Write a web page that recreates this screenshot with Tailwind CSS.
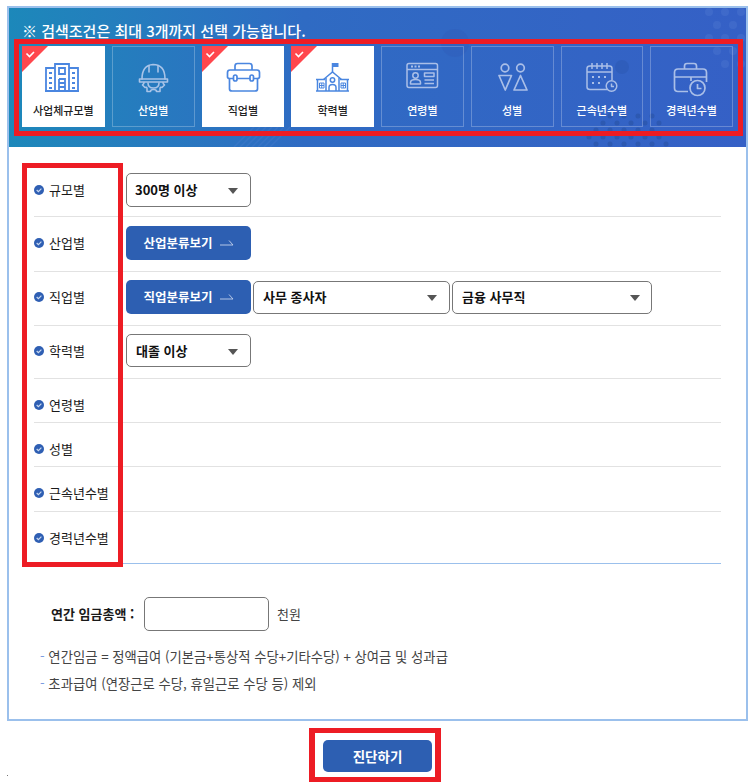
<!DOCTYPE html>
<html lang="ko">
<head>
<meta charset="utf-8">
<title>검색조건</title>
<script src="https://cdn.jsdelivr.net/npm/@tailwindcss/browser@4"></script>
</head>
<body class="bg-white font-['Noto_Sans_CJK_KR','Noto_Sans',sans-serif] text-[13px] text-[#1a1a1a]">
<div class="relative w-[752px] h-[782px] overflow-hidden pt-[6px] pl-[7px]">
  <div class="relative w-[741px] h-[715px] border-2 border-[#9bc0ec]">
    <!-- header -->
    <div class="relative w-[737px] h-[139px] bg-linear-to-r from-[#1c88ba] via-[#2f6bc3] via-40% to-[#3560c6] overflow-hidden">
      <svg class="absolute left-0 top-0 pointer-events-none" width="737" height="139" viewBox="0 0 737 139">
        <circle cx="446" cy="35" r="14" fill="#2f5cb8" opacity=".4"/>
        <circle cx="613" cy="59" r="7" fill="#2a56b0" opacity=".45"/>
        <g fill="#5a82d6" opacity=".28">
          <circle cx="700" cy="4" r="4"/><circle cx="716" cy="4" r="4"/><circle cx="732" cy="4" r="4"/>
          <circle cx="708" cy="17" r="4"/><circle cx="724" cy="17" r="4"/><circle cx="700" cy="30" r="4"/><circle cx="716" cy="30" r="4"/><circle cx="732" cy="30" r="4"/>
          <circle cx="708" cy="43" r="4"/><circle cx="724" cy="43" r="4"/><circle cx="716" cy="56" r="4"/><circle cx="732" cy="56" r="4"/>
        </g>
        <g fill="#27509f" opacity=".5">
          <circle cx="601" cy="108" r="2.5"/><circle cx="615" cy="108" r="2.5"/><circle cx="629" cy="108" r="2.5"/><circle cx="643" cy="108" r="2.5"/>
          <circle cx="594" cy="115" r="2.5"/><circle cx="608" cy="115" r="2.5"/><circle cx="622" cy="115" r="2.5"/><circle cx="636" cy="115" r="2.5"/><circle cx="650" cy="115" r="2.5"/>
          <circle cx="587" cy="122" r="2.5"/><circle cx="601" cy="122" r="2.5"/><circle cx="615" cy="122" r="2.5"/><circle cx="629" cy="122" r="2.5"/><circle cx="643" cy="122" r="2.5"/>
          <circle cx="580" cy="129" r="2.5"/><circle cx="594" cy="129" r="2.5"/><circle cx="608" cy="129" r="2.5"/><circle cx="622" cy="129" r="2.5"/><circle cx="636" cy="129" r="2.5"/><circle cx="650" cy="129" r="2.5"/>
          <circle cx="587" cy="136" r="2.5"/><circle cx="601" cy="136" r="2.5"/><circle cx="615" cy="136" r="2.5"/><circle cx="629" cy="136" r="2.5"/><circle cx="643" cy="136" r="2.5"/><circle cx="657" cy="136" r="2.5"/>
        </g>
        <path d="M225 139 L245 119 M231 139 L251 119 M237 139 L257 119 M243 139 L263 119 M249 139 L269 119 M255 139 L275 119 M261 139 L281 119" stroke="#4b7ed0" stroke-width="1.5" opacity=".35"/>
      </svg>
      <h2 class="relative h-[31px] pl-[13px] text-[15px] leading-[45px] font-medium text-white whitespace-nowrap">※ 검색조건은 최대 3개까지 선택 가능합니다.</h2>
      <div class="relative ml-[5px] mt-0 w-[729px] h-[97px] border-[5px] border-[#ed1c24] pt-[2px] pl-[3px]">
        <div class="grid grid-cols-8 gap-[7px] w-[711px] h-[81px] text-center text-[11px] font-medium">
          <!-- 사업체규모별 -->
          <div class="bg-white text-[#222]">
            <svg class="block" width="83" height="52" viewBox="0 0 83 52">
              <path d="M0 0H26L0 26Z" fill="#ff474d"/><path d="M4.500 7.500L7.500 10.500L12 6" fill="none" stroke="#fff" stroke-width="1.600"/>
              <g fill="none" stroke="#4a86e0" stroke-width="1.800">
                <path d="M24 22H33V45H24ZM47 22H56V45H47ZM33 18H47V45H33ZM23 45H57"/>
                <path d="M37 22H43V28H37ZM37 33H43V45M37 33V45M37 37H43M37 41H43"/>
              </g>
              <path d="M27 26h3v2h-3zM27 31h3v2h-3zM27 36h3v2h-3zM27 41h3v2h-3zM50 26h3v2h-3zM50 31h3v2h-3zM50 36h3v2h-3zM50 41h3v2h-3z" fill="#4a86e0"/>
            </svg>
            <div class="h-[24px] leading-[24px] whitespace-nowrap">사업체규모별</div>
          </div>
          <!-- 산업별 -->
          <div class="ring-1 ring-inset ring-white/25 text-white">
            <svg class="block" width="83" height="52" viewBox="0 0 83 52">
              <g fill="none" stroke="#a9c4e8" stroke-width="1.600" stroke-linecap="round" stroke-linejoin="round">
                <path d="M30 33C30 24 34 19 41 18.500C49 18.500 53 24 53 33"/>
                <path d="M37 19.500V26M46 19.500V26"/>
                <path d="M27.500 33H55.500V36H27.500Z"/>
                <path d="M32 36.500C32 38 31 38.500 30.500 39L33 41.500C34 41 35 41 35 42.500V45.500H38.500C38.500 44 40 43.500 41.500 43.500C43 43.500 44.500 44 44.500 45.500H48V42.500C48 41 49 41 50 41.500L52.500 39C52 38.500 51 38 51 36.500"/>
                <path d="M36 37C36 41 38.500 42 41.500 42C44.500 42 47 41 47 37"/>
              </g>
            </svg>
            <div class="h-[24px] leading-[24px] whitespace-nowrap">산업별</div>
          </div>
          <!-- 직업별 -->
          <div class="bg-white text-[#222]">
            <svg class="block" width="83" height="52" viewBox="0 0 83 52">
              <path d="M0 0H26L0 26Z" fill="#ff474d"/><path d="M4.500 7.500L7.500 10.500L12 6" fill="none" stroke="#fff" stroke-width="1.600"/>
              <g fill="none" stroke="#4a86e0" stroke-width="1.700" stroke-linejoin="round">
                <path d="M33 24V20C33 18.500 34 17.500 35.500 17.500H47.500C49 17.500 50 18.500 50 20V24"/>
                <path d="M25.500 31V26.500C25.500 25 26.500 24 28 24H55C56.500 24 57.500 25 57.500 26.500V31C57.500 32 56.500 32.500 55 32.500H28C26.500 32.500 25.500 32 25.500 31Z"/>
                <path d="M27.500 32.500V43C27.500 44.500 28.500 45 30 45H53C54.500 45 55.500 44.500 55.500 43V32.500"/>
                <rect x="31.500" y="29" width="3.500" height="6" rx="1.750" fill="#fff"/>
                <rect x="48" y="29" width="3.500" height="6" rx="1.750" fill="#fff"/>
              </g>
            </svg>
            <div class="h-[24px] leading-[24px] whitespace-nowrap">직업별</div>
          </div>
          <!-- 학력별 -->
          <div class="bg-white text-[#222]">
            <svg class="block" width="83" height="52" viewBox="0 0 83 52">
              <path d="M0 0H26L0 26Z" fill="#ff474d"/><path d="M4.500 7.500L7.500 10.500L12 6" fill="none" stroke="#fff" stroke-width="1.600"/>
              <g fill="none" stroke="#4a86e0" stroke-width="1.500">
                <path d="M41.500 26V17"/>
                <path d="M32.500 33.500L41.500 26L50.500 33.500"/>
                <path d="M35 32V45M48 32V45M25 33.500H34M49 33.500H58M26.500 33.500V45M56.500 33.500V45M25 45H58"/>
                <circle cx="41.500" cy="34" r="2.200"/>
                <path d="M38 45V41.500C38 39.500 39.500 38.500 41.500 38.500C43.500 38.500 45 39.500 45 41.500V45"/>
                <path d="M28.500 37H33V42H28.500ZM30.750 37V42M28.500 39.500H33M50 37H54.500V42H50ZM52.250 37V42M50 39.500H54.500" stroke-width="1"/>
              </g>
              <path d="M42 17H47.500V21H42Z" fill="#4a86e0"/>
            </svg>
            <div class="h-[24px] leading-[24px] whitespace-nowrap">학력별</div>
          </div>
          <!-- 연령별 -->
          <div class="ring-1 ring-inset ring-white/25 text-white">
            <svg class="block" width="83" height="52" viewBox="0 0 83 52">
              <g fill="none" stroke="#aabfe8" stroke-width="1.500" stroke-linejoin="round">
                <rect x="26" y="17.500" width="30.500" height="24" rx="2"/>
                <path d="M26 23.500H56.500"/>
                <circle cx="34.500" cy="29.500" r="2.700"/>
                <path d="M29.500 38V36.500C29.500 34.500 31.500 33.500 34.500 33.500C37.500 33.500 39.500 34.500 39.500 36.500V38Z"/>
                <path d="M43.500 27H53V30.500H43.500ZM43.500 34H53M43.500 37.500H53"/>
              </g>
              <path d="M30 19.500h2v2h-2zM33.500 19.500h2v2h-2zM37 19.500h2v2h-2z" fill="#aabfe8"/>
            </svg>
            <div class="h-[24px] leading-[24px] whitespace-nowrap">연령별</div>
          </div>
          <!-- 성별 -->
          <div class="ring-1 ring-inset ring-white/25 text-white">
            <svg class="block" width="83" height="52" viewBox="0 0 83 52">
              <g fill="none" stroke="#aabfe8" stroke-width="1.700" stroke-linejoin="round">
                <circle cx="34" cy="22" r="3.800"/>
                <circle cx="49.500" cy="22" r="3.800"/>
                <path d="M28 29.500H40.500L34.250 44Z"/>
                <path d="M43 44H56L49.500 29.500Z"/>
              </g>
            </svg>
            <div class="h-[24px] leading-[24px] whitespace-nowrap">성별</div>
          </div>
          <!-- 근속년수별 -->
          <div class="ring-1 ring-inset ring-white/25 text-white">
            <svg class="block" width="83" height="52" viewBox="0 0 83 52">
              <g fill="none" stroke="#aabfe8" stroke-width="1.500" stroke-linejoin="round">
                <path d="M46 43.500H29C27 43.500 26 42.500 26 41V22.500C26 21 27 20 29 20H48.500C50 20 51 21 51 22.500V34"/>
                <path d="M26 26H51M31 17V23M36 17V23M41 17V23M46 17V23"/>
                <circle cx="50.500" cy="40" r="5.300"/>
                <path d="M50.500 37.500V40.500H53"/>
              </g>
              <path d="M31 30h2v2h-2zM37 30h2v2h-2zM43 30h2v2h-2zM31 36h2v2h-2zM37 36h2v2h-2z" fill="#aabfe8"/>
            </svg>
            <div class="h-[24px] leading-[24px] whitespace-nowrap">근속년수별</div>
          </div>
          <!-- 경력년수별 -->
          <div class="ring-1 ring-inset ring-white/25 text-white">
            <svg class="block" width="83" height="52" viewBox="0 0 83 52">
              <g fill="none" stroke="#aabfe8" stroke-width="1.700" stroke-linejoin="round">
                <path d="M34.500 23V20C34.500 18.500 35.500 17.500 37 17.500H44C45.500 17.500 46.500 18.500 46.500 20V23"/>
                <path d="M38 45.500H28C26 45.500 24.500 44 24.500 42V26.500C24.500 24.500 26 23 28 23H53C55 23 56.500 24.500 56.500 26.500V36"/>
                <path d="M24.500 31H56.500M41 31V35"/>
                <circle cx="47.500" cy="42" r="7.500"/>
                <path d="M47.500 38V42.500H51.500"/>
              </g>
            </svg>
            <div class="h-[24px] leading-[24px] whitespace-nowrap">경력년수별</div>
          </div>
        </div>
      </div>
    </div>

    <!-- rows -->
    <div class="pl-[13px] pr-[25px] pt-[16px]">
      <div class="flex flex-col ml-[12px] h-[401px]">
        <div class="flex items-center h-[54px] border-b border-[#e2e2e2]">
          <span class="flex items-center w-[92px] gap-[5px] shrink-0"><svg width="10" height="10" viewBox="0 0 10 10"><circle cx="5" cy="5" r="5" fill="#2f5fb3"/><path d="M2.700 5L4.400 6.700L7.400 3.700" fill="none" stroke="#c8d8f0" stroke-width="1.200"/></svg>규모별</span>
          <div class="relative w-[125px] h-[34px]"><select class="appearance-none w-full h-full pl-[8px] border border-[#777] rounded-[5px] bg-white font-bold text-[13px] text-[#111]"><option>300명 이상</option></select><svg class="absolute left-[102px] top-[15px]" width="10" height="6" viewBox="0 0 10 6"><path d="M0 0H10L5 6Z" fill="#555"/></svg></div>
        </div>
        <div class="flex items-center h-[55px] pb-[2px] border-b border-[#e2e2e2]">
          <span class="flex items-center w-[92px] gap-[5px] shrink-0"><svg width="10" height="10" viewBox="0 0 10 10"><circle cx="5" cy="5" r="5" fill="#2f5fb3"/><path d="M2.700 5L4.400 6.700L7.400 3.700" fill="none" stroke="#c8d8f0" stroke-width="1.200"/></svg>산업별</span>
          <button class="flex items-center justify-center gap-[7px] w-[125px] h-[34px] rounded-[5px] bg-[#2d5fb2] text-white font-bold text-[12.5px]">산업분류보기<svg width="14" height="6" viewBox="0 0 14 6"><path d="M0 5H13L9 .5" fill="none" stroke="#c5d3ec" stroke-width=".9"/></svg></button>
        </div>
        <div class="flex items-center h-[54px] pb-[3px] border-b border-[#e2e2e2]">
          <span class="flex items-center w-[92px] gap-[5px] shrink-0"><svg width="10" height="10" viewBox="0 0 10 10"><circle cx="5" cy="5" r="5" fill="#2f5fb3"/><path d="M2.700 5L4.400 6.700L7.400 3.700" fill="none" stroke="#c8d8f0" stroke-width="1.200"/></svg>직업별</span>
          <div class="flex items-center gap-[2px]">
            <button class="flex items-center justify-center gap-[7px] w-[125px] h-[34px] rounded-[5px] bg-[#2d5fb2] text-white font-bold text-[12.5px]">직업분류보기<svg width="14" height="6" viewBox="0 0 14 6"><path d="M0 5H13L9 .5" fill="none" stroke="#c5d3ec" stroke-width=".9"/></svg></button>
            <div class="relative w-[197px] h-[33px]"><select class="appearance-none w-full h-full pl-[9px] border border-[#777] rounded-[5px] bg-white font-bold text-[13px] text-[#111]"><option>사무 종사자</option></select><svg class="absolute left-[174px] top-[14px]" width="10" height="6" viewBox="0 0 10 6"><path d="M0 0H10L5 6Z" fill="#555"/></svg></div>
            <div class="relative w-[200px] h-[33px]"><select class="appearance-none w-full h-full pl-[9px] border border-[#777] rounded-[5px] bg-white font-bold text-[13px] text-[#111]"><option>금융 사무직</option></select><svg class="absolute left-[178px] top-[14px]" width="10" height="6" viewBox="0 0 10 6"><path d="M0 0H10L5 6Z" fill="#555"/></svg></div>
          </div>
        </div>
        <div class="flex items-center h-[53px] pb-[3px] border-b border-[#e2e2e2]">
          <span class="flex items-center w-[92px] gap-[5px] shrink-0"><svg width="10" height="10" viewBox="0 0 10 10"><circle cx="5" cy="5" r="5" fill="#2f5fb3"/><path d="M2.700 5L4.400 6.700L7.400 3.700" fill="none" stroke="#c8d8f0" stroke-width="1.200"/></svg>학력별</span>
          <div class="relative w-[125px] h-[33px]"><select class="appearance-none w-full h-full pl-[9px] border border-[#777] rounded-[5px] bg-white font-bold text-[13px] text-[#111]"><option>대졸 이상</option></select><svg class="absolute left-[102px] top-[15px]" width="10" height="6" viewBox="0 0 10 6"><path d="M0 0H10L5 6Z" fill="#555"/></svg></div>
        </div>
        <div class="flex items-center h-[44px] pt-[9px] border-b border-[#e2e2e2]">
          <span class="flex items-center w-[92px] gap-[5px] shrink-0"><svg width="10" height="10" viewBox="0 0 10 10"><circle cx="5" cy="5" r="5" fill="#2f5fb3"/><path d="M2.700 5L4.400 6.700L7.400 3.700" fill="none" stroke="#c8d8f0" stroke-width="1.200"/></svg>연령별</span>
        </div>
        <div class="flex items-center h-[44px] pt-[9px] border-b border-[#e2e2e2]">
          <span class="flex items-center w-[92px] gap-[5px] shrink-0"><svg width="10" height="10" viewBox="0 0 10 10"><circle cx="5" cy="5" r="5" fill="#2f5fb3"/><path d="M2.700 5L4.400 6.700L7.400 3.700" fill="none" stroke="#c8d8f0" stroke-width="1.200"/></svg>성별</span>
        </div>
        <div class="flex items-center h-[45px] pt-[8px] border-b border-[#e2e2e2]">
          <span class="flex items-center w-[92px] gap-[5px] shrink-0"><svg width="10" height="10" viewBox="0 0 10 10"><circle cx="5" cy="5" r="5" fill="#2f5fb3"/><path d="M2.700 5L4.400 6.700L7.400 3.700" fill="none" stroke="#c8d8f0" stroke-width="1.200"/></svg>근속년수별</span>
        </div>
        <div class="flex items-center h-[52px] -ml-[12px] pl-[12px] border-b border-[#9bc0ec]">
          <span class="flex items-center w-[92px] gap-[5px] shrink-0"><svg width="10" height="10" viewBox="0 0 10 10"><circle cx="5" cy="5" r="5" fill="#2f5fb3"/><path d="M2.700 5L4.400 6.700L7.400 3.700" fill="none" stroke="#c8d8f0" stroke-width="1.200"/></svg>경력년수별</span>
        </div>
      </div>

      <!-- wage -->
      <div class="flex items-center mt-[33px] ml-[29px]">
        <label class="w-[93px] font-bold whitespace-nowrap">연간 임금총액 :</label>
        <input type="text" class="w-[125px] h-[34px] border border-[#777] rounded-[5px] bg-white">
        <span class="ml-[8px] text-[#444]">천원</span>
      </div>
      <ul class="mt-[12px] ml-[18px] text-[#444] text-[13.33px]">
        <li class="h-[27px] leading-[27px] whitespace-nowrap"><span class="text-[#7a9be0]">-</span> 연간임금 = 정액급여 (기본금+통상적 수당+기타수당) + 상여금 및 성과급</li>
        <li class="h-[27px] leading-[27px] whitespace-nowrap"><span class="text-[#7a9be0]">-</span> 초과급여 (연장근로 수당, 휴일근로 수당 등) 제외</li>
      </ul>
    </div>

    <!-- annotation over the left labels -->
    <div class="absolute left-[13px] top-[155px] w-[101px] h-[404px] border-[5px] border-[#ed1c24] pointer-events-none"></div>
  </div>

  <!-- submit -->
  <div class="flex justify-start ml-[302px] mt-[7px]">
    <div class="w-[132px] h-[54px] border-x-[6px] border-y-[5px] border-[#ed1c24] pl-[8px] pt-[7px]">
      <button class="w-[109px] h-[32px] rounded-[5px] bg-[#2d5fb2] text-white font-bold text-[13.5px]">진단하기</button>
    </div>
  </div>
  <span class="absolute left-[7px] top-[775px] w-px h-px bg-[#777]"></span>
</div>
</body>
</html>
